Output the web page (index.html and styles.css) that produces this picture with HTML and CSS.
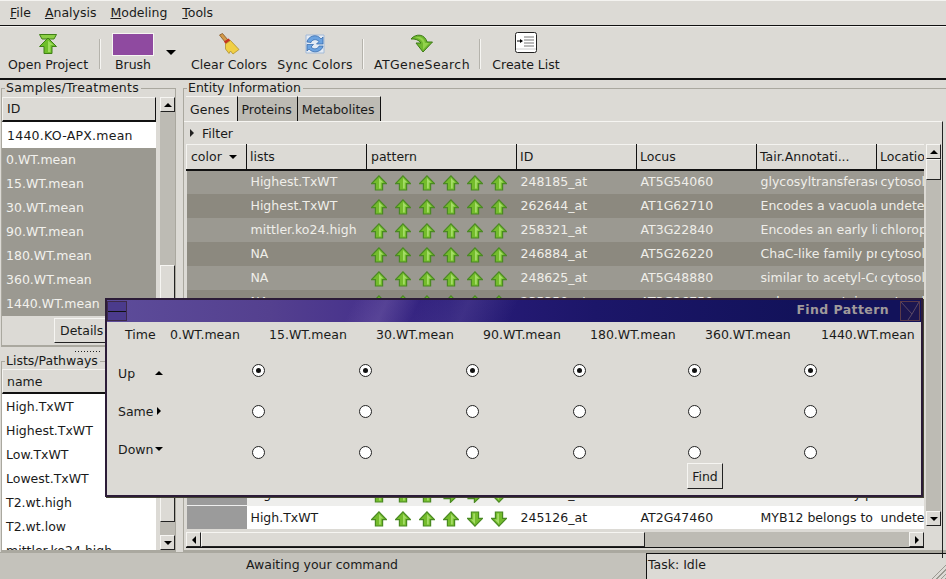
FILE: index.html
```html
<!DOCTYPE html>
<html lang="en">
  <head>
    <meta charset="UTF-8" />
    <title>Find Pattern</title>
    <link rel="stylesheet" href="styles.css">
  </head>
  <body>
    <svg class="defs" width="0" height="0">
      <symbol id="up" viewBox="0 0 16 16">
        <path d="M8 .8 15.4 8.6H11.6V15H4.4V8.6H.6Z" fill="#74bc2c" stroke="#4a8a22" stroke-width="1.2"/>
        <path d="M8 3 12.3 7.4H9.8V13.5H8Z" fill="#a4dc66"/>
      </symbol>
      <symbol id="down" viewBox="0 0 16 16">
        <path d="M8 15.2 15.4 7.4H11.6V1H4.4V7.4H.6Z" fill="#74bc2c" stroke="#4a8a22" stroke-width="1.2"/>
        <path d="M8 13 3.7 8.6H6.2V2.5H8Z" fill="#a4dc66"/>
      </symbol>
      <symbol id="right" viewBox="0 0 16 16">
        <path d="M15.2 8 7.4 .6V4.4H1V11.6H7.4V15.4Z" fill="#74bc2c" stroke="#4a8a22" stroke-width="1.2"/>
      </symbol>
    </svg>

    <nav class="menubar">
      <span><u>F</u>ile</span>
      <span><u>A</u>nalysis</span>
      <span><u>M</u>odeling</span>
      <span class="menu-tools"><u>T</u>ools</span>
    </nav>

    <div class="toolbar">
      <div class="tool tool-open">
        <svg width="24" height="24" viewBox="0 0 24 24">
          <path d="M3.5 3.5H20.5L18 8H6Z" fill="#8ccf45" stroke="#3f7f17"/>
          <path d="M12 7 20.5 15.5H16V22.5H8V15.5H3.5Z" fill="#6fbf2a" stroke="#3f7f17"/>
          <path d="M12 9.5V21H14.5V14H17.5Z" fill="#9edc5c"/>
        </svg>
        <span>Open Project</span>
      </div>
      <i class="sep"></i>
      <div class="tool tool-brush">
        <b class="swatch"></b>
        <span>Brush</span>
      </div>
      <b class="caret"></b>
      <div class="tool tool-clear">
        <svg width="24" height="24" viewBox="0 0 24 24">
          <path d="M2.5 4 5.5 2.5 11 9 8 11Z" fill="#d49a4a" stroke="#7a4a17" stroke-width=".7"/>
          <path d="M7 10.5 11.5 7.5 13.5 9.5 8.5 13Z" fill="#c8321e"/>
          <path d="M8.5 13 13.5 9.5 22 18.5 16 23 13.5 20 12 22.5 8.5 18Z" fill="#f0cf45" stroke="#a88620" stroke-width=".7"/>
        </svg>
        <span>Clear Colors</span>
      </div>
      <div class="tool tool-sync">
        <svg width="24" height="24" viewBox="0 0 24 24">
          <path d="M3 4H21V22H3Z" fill="#e4ebf4" stroke="#a3bad8"/>
          <path d="M4 11C5 5 14 2 18 8L20 6V13H13.5L16 10.5C13 7.5 9 8.5 8 11.5Z" fill="#6ca3e0" stroke="#2f64a8" stroke-width=".7"/>
          <path d="M20 15C19 21 10 23 6 18L4 20V13.5H10.5L8 16C11 19 15 18 16 15Z" fill="#6ca3e0" stroke="#2f64a8" stroke-width=".7"/>
        </svg>
        <span>Sync Colors</span>
      </div>
      <i class="sep"></i>
      <div class="tool tool-search">
        <svg width="24" height="24" viewBox="0 0 24 24">
          <path d="M1 8C6 2 15 3 17 11H22.5L13 21 6 12H11C9 9 5 7.5 1 8Z" fill="#6fb82e" stroke="#3d7a16"/>
          <path d="M5 6.5C9 5 14 6 15 12H19L13 18.5V12C12 9 9 7 5 6.5Z" fill="#93d24c"/>
        </svg>
        <span>ATGeneSearch</span>
      </div>
      <i class="sep"></i>
      <div class="tool tool-list">
        <svg width="24" height="24" viewBox="0 0 24 24">
          <rect x="1.5" y="1.5" width="21" height="20" rx="2" fill="#fff" stroke="#222"/>
          <path d="M10 6H20M10 9H20M10 12H20M10 15H20" stroke="#777"/>
          <path d="M3 10H7" stroke="#000"/>
          <path d="M6 8 9 10 6 12Z" fill="#000"/>
          <path d="M2 18H22" stroke="#ccc"/>
        </svg>
        <span>Create List</span>
      </div>
    </div>

    <main class="workspace">
      <aside class="sidebar">
        <section class="group group-samples">
          <h2>Samples/Treatments</h2>
          <div class="list-wrap">
            <div class="list">
              <div class="head">ID</div>
              <div class="item item-wide">1440.KO-APX.mean</div>
              <div class="item sel">0.WT.mean</div>
              <div class="item sel">15.WT.mean</div>
              <div class="item sel">30.WT.mean</div>
              <div class="item sel">90.WT.mean</div>
              <div class="item sel">180.WT.mean</div>
              <div class="item sel">360.WT.mean</div>
              <div class="item sel">1440.WT.mean</div>
            </div>
            <div class="vscroll">
              <b class="btn"><i class="tri-up"></i></b>
              <span class="trough"><b class="thumb thumb-samples"></b></span>
            </div>
          </div>
          <div class="details"><button>Details</button></div>
        </section>
        <div class="grip"></div>
        <section class="group group-lists">
          <h2>Lists/Pathways</h2>
          <div class="list-wrap">
            <div class="list">
              <div class="head">name</div>
              <div class="item">High.TxWT</div>
              <div class="item">Highest.TxWT</div>
              <div class="item">Low.TxWT</div>
              <div class="item">Lowest.TxWT</div>
              <div class="item">T2.wt.high</div>
              <div class="item">T2.wt.low</div>
              <div class="item">mittler.ko24.high</div>
            </div>
            <div class="vscroll">
              <b class="btn"><i class="tri-up"></i></b>
              <span class="trough"><b class="thumb thumb-lists"></b></span>
              <b class="btn"><i class="tri-down"></i></b>
            </div>
          </div>
        </section>
      </aside>

      <section class="group group-entity">
        <h2>Entity Information</h2>
        <div class="tabs">
          <span class="tab on">Genes</span>
          <span class="tab">Proteins</span>
          <span class="tab">Metabolites</span>
        </div>
        <div class="pane">
          <div class="filter"><i class="tri-right"></i>Filter</div>
          <div class="table-area">
            <div class="table-col">
              <div class="table-clip">
                <table>
                  <colgroup>
                    <col class="c-color"><col class="c-lists"><col class="c-pattern"><col class="c-id"><col class="c-locus"><col class="c-tair"><col class="c-loc">
                  </colgroup>
                  <thead>
                    <tr><th>color <i class="tri-down"></i></th><th>lists</th><th>pattern</th><th>ID</th><th>Locus</th><th>Tair.Annotati...</th><th>Location</th></tr>
                  </thead>
                  <tbody>
                    <tr class="odd"><td></td><td>Highest.TxWT</td><td class="arrows"><svg><use href="#up"/></svg><svg><use href="#up"/></svg><svg><use href="#up"/></svg><svg><use href="#up"/></svg><svg><use href="#up"/></svg><svg><use href="#up"/></svg></td><td>248185_at</td><td>AT5G54060</td><td>glycosyltransferase</td><td>cytosol</td></tr>
                    <tr class="even"><td></td><td>Highest.TxWT</td><td class="arrows"><svg><use href="#up"/></svg><svg><use href="#up"/></svg><svg><use href="#up"/></svg><svg><use href="#up"/></svg><svg><use href="#up"/></svg><svg><use href="#up"/></svg></td><td>262644_at</td><td>AT1G62710</td><td>Encodes a vacuolar</td><td>undetermined</td></tr>
                    <tr class="odd"><td></td><td>mittler.ko24.high</td><td class="arrows"><svg><use href="#up"/></svg><svg><use href="#up"/></svg><svg><use href="#up"/></svg><svg><use href="#up"/></svg><svg><use href="#up"/></svg><svg><use href="#up"/></svg></td><td>258321_at</td><td>AT3G22840</td><td>Encodes an early li</td><td>chloroplast</td></tr>
                    <tr class="even"><td></td><td>NA</td><td class="arrows"><svg><use href="#up"/></svg><svg><use href="#up"/></svg><svg><use href="#up"/></svg><svg><use href="#up"/></svg><svg><use href="#up"/></svg><svg><use href="#up"/></svg></td><td>246884_at</td><td>AT5G26220</td><td>ChaC-like family pr</td><td>cytosol</td></tr>
                    <tr class="odd"><td></td><td>NA</td><td class="arrows"><svg><use href="#up"/></svg><svg><use href="#up"/></svg><svg><use href="#up"/></svg><svg><use href="#up"/></svg><svg><use href="#up"/></svg><svg><use href="#up"/></svg></td><td>248625_at</td><td>AT5G48880</td><td>similar to acetyl-Co</td><td>cytosol</td></tr>
                    <tr class="even"><td></td><td>NA</td><td class="arrows"><svg><use href="#up"/></svg><svg><use href="#up"/></svg><svg><use href="#up"/></svg><svg><use href="#up"/></svg><svg><use href="#up"/></svg><svg><use href="#up"/></svg></td><td>235350_at</td><td>AT3G26750</td><td>unknown protein</td><td>cytosol</td></tr>
                    <tr class="filler"><td colspan="7"></td></tr>
                    <tr class="pale"><td></td><td>High.TxWT</td><td class="arrows"><svg><use href="#up"/></svg><svg><use href="#up"/></svg><svg><use href="#up"/></svg><svg><use href="#right"/></svg><svg><use href="#right"/></svg><svg><use href="#down"/></svg></td><td>245126_at</td><td>AT2G47460</td><td>Unknown family protein</td><td>undetermined</td></tr>
                    <tr class="white"><td></td><td>High.TxWT</td><td class="arrows"><svg><use href="#up"/></svg><svg><use href="#up"/></svg><svg><use href="#up"/></svg><svg><use href="#up"/></svg><svg><use href="#down"/></svg><svg><use href="#down"/></svg></td><td>245126_at</td><td>AT2G47460</td><td>MYB12 belongs to</td><td>undetermined</td></tr>
                  </tbody>
                </table>
              </div>
              <div class="hscroll">
                <b class="btn"><i class="tri-left"></i></b>
                <span class="htrough"><b class="hthumb"></b></span>
                <b class="btn"><i class="tri-right"></i></b>
              </div>
            </div>
            <div class="vscroll vscroll-table">
              <b class="btn"><i class="tri-up"></i></b>
              <span class="trough"><b class="thumb thumb-table"></b></span>
              <b class="btn"><i class="tri-down"></i></b>
            </div>
          </div>
        </div>
      </section>
    </main>

    <footer class="statusbar">
      <div class="status-msg">Awaiting your command</div>
      <div class="status-task">Task: Idle<b class="size-grip"></b></div>
    </footer>

    <div class="dialog">
      <div class="titlebar">
        <span class="win-btn win-min"></span>
        <span class="win-title">Find Pattern</span>
        <span class="win-btn win-close">
          <svg width="18" height="18" viewBox="0 0 18 18"><path d="M0 0 11 12 18 0M11 12 7 18" fill="none" stroke="#5c4a68"/></svg>
        </span>
      </div>
      <div class="pattern-grid">
        <span class="time">Time</span>
        <span>0.WT.mean</span><span>15.WT.mean</span><span>30.WT.mean</span><span>90.WT.mean</span><span>180.WT.mean</span><span>360.WT.mean</span><span>1440.WT.mean</span>

        <span class="dir dir-up">Up<i class="tri-up"></i></span>
        <i class="radio on"></i><i class="radio on"></i><i class="radio on"></i><i class="radio on"></i><i class="radio on"></i><i class="radio on"></i><i></i>

        <span class="dir dir-same">Same<i class="tri-right"></i></span>
        <i class="radio"></i><i class="radio"></i><i class="radio"></i><i class="radio"></i><i class="radio"></i><i class="radio"></i><i></i>

        <span class="dir dir-down">Down<i class="tri-down"></i></span>
        <i class="radio"></i><i class="radio"></i><i class="radio"></i><i class="radio"></i><i class="radio"></i><i class="radio"></i><i></i>
      </div>
      <button class="find">Find</button>
    </div>
  </body>
</html>
```

FILE: styles.css
```css
* {
  box-sizing: border-box;
}

html,
body {
  height: 100%;
}

body {
  margin: 0;
  width: 946px;
  height: 579px;
  overflow: hidden;
  display: flex;
  flex-direction: column;
  position: relative;
  background-color: #dcdad5;
  color: #1a1a1a;
  font-family: "DejaVu Sans", sans-serif;
  font-size: 12.5px;
}

.defs {
  position: absolute;
}

/* small triangles */
.tri-up,
.tri-down,
.tri-left,
.tri-right {
  display: inline-block;
  width: 0;
  height: 0;
  border: 4px solid transparent;
}

.tri-up {
  border-top: 0;
  border-bottom: 4px solid #000;
}

.tri-down {
  border-bottom: 0;
  border-top: 4px solid #000;
}

.tri-left {
  border-left: 0;
  border-right: 4px solid #000;
}

.tri-right {
  border-right: 0;
  border-left: 4px solid #000;
}

/* menu + toolbar */
.menubar {
  height: 26px;
  flex: none;
  display: flex;
  align-items: center;
  gap: 14px;
  padding: 0 0 1px 10px;
  border-bottom: 1px solid #111;
  box-shadow: inset 0 1px 0 #f4f3f0;
}

.menu-tools {
  margin-left: 1px;
}

.toolbar {
  height: 54px;
  flex: none;
  display: flex;
  align-items: flex-start;
  border-top: 1px solid #f4f3f0;
  border-bottom: 2px solid #111;
}

.tool {
  display: flex;
  flex-direction: column;
  align-items: center;
  padding-top: 4px;
  height: 51px;
  gap: 2px;
}

.tool svg {
  flex: none;
}

.tool-open {
  margin-left: 7px;
  width: 82px;
}

.tool-brush {
  margin-left: 11px;
  width: 42px;
  padding-top: 6px;
  gap: 1px;
}

.tool-clear {
  margin-left: 14px;
  width: 78px;
}

.tool-sync {
  margin-left: 9px;
  width: 76px;
  letter-spacing: 0.2px;
}

.tool-search {
  margin-left: 10px;
  width: 96px;
  letter-spacing: 0.4px;
}

.tool-list {
  margin-left: 10px;
  width: 70px;
}

.swatch {
  display: block;
  width: 42px;
  height: 23px;
  flex: none;
  background-color: #8f4aa0;
  border: 1px solid #f6f5f2;
}

.caret {
  margin: 23px 0 0 12px;
  width: 0;
  height: 0;
  border: 5px solid transparent;
  border-top: 5px solid #000;
  border-bottom: 0;
}

.sep {
  width: 2px;
  height: 30px;
  margin: 12px 0 0 10px;
  background-color: #b5b3ac;
  border-right: 1px solid #f6f5f2;
}

.tool-sync + .sep,
.tool-search + .sep {
  margin-left: 9px;
}

/* main area */
.workspace {
  flex: 1;
  min-height: 0;
  display: flex;
  gap: 5px;
  padding-top: 2px;
}

.sidebar {
  width: 178px;
  flex: none;
  display: flex;
  flex-direction: column;
}

.group {
  position: relative;
  border: 1px solid #aaa89f;
  border-bottom-width: 2px;
  margin: 6px 2px 0 1px;
}

.group h2 {
  position: absolute;
  top: -9px;
  left: 3px;
  margin: 0;
  padding: 0 2px 0 1px;
  font-size: 12.5px;
  font-weight: normal;
  line-height: 16px;
  background-color: #dcdad5;
  white-space: nowrap;
}

.group-samples {
  height: 259px;
}

.group-samples h2 {
  letter-spacing: 0.3px;
}

.group-lists {
  flex: 1;
  min-height: 0;
  margin-top: 0;
}

.grip {
  height: 12px;
  flex: none;
  margin: 2px 0 0 75px;
  width: 26px;
  background: repeating-linear-gradient(90deg, #222 0 1px, transparent 1px 3px) 0 2px / 100% 1px no-repeat;
}

.list-wrap {
  display: flex;
  padding-top: 8px;
  height: 227px;
}

.group-lists .list-wrap {
  height: 100%;
  padding-top: 7px;
}

.list {
  width: 154px;
  flex: none;
  overflow: hidden;
  background-color: #fff;
}

.head {
  height: 25px;
  margin-bottom: 2px;
  padding-left: 4px;
  line-height: 22px;
  background-color: #dcdad5;
  border-top: 1px solid #f4f3f0;
  border-left: 1px solid #f4f3f0;
  border-right: 1px solid #111;
  border-bottom: 2px solid #111;
}

.group-lists .head {
  margin-bottom: 1px;
  line-height: 24px;
}

.item {
  height: 24px;
  padding-left: 4px;
  line-height: 24px;
  white-space: nowrap;
}

.item-wide {
  padding-left: 5px;
  letter-spacing: 0.25px;
}

.sel {
  background-color: #9b9991;
  color: #f2f1ed;
}

.vscroll {
  width: 15px;
  margin-left: 4px;
  flex: none;
  display: flex;
  flex-direction: column;
  background-color: #bdbbb4;
}

.btn {
  height: 15px;
  width: 15px;
  flex: none;
  display: flex;
  align-items: center;
  justify-content: center;
  background-color: #dcdad5;
  border: 1px solid;
  border-color: #f6f5f2 #222 #222 #f6f5f2;
}

.trough {
  flex: 1;
  position: relative;
}

.thumb {
  position: absolute;
  left: 0;
  width: 15px;
  background-color: #dcdad5;
  border: 1px solid;
  border-color: #f6f5f2 #222 #222 #f6f5f2;
}

.thumb-samples {
  top: 153px;
  height: 59px;
}

.thumb-lists {
  top: 0;
  height: 138px;
}

.thumb-table {
  top: 0;
  height: 21px;
}

.details {
  display: flex;
  padding: 2px 0 0 52px;
}

button {
  font: inherit;
  color: inherit;
  background-color: #dcdad5;
  border: 1px solid;
  border-color: #f6f5f2 #222 #222 #f6f5f2;
  padding: 0;
}

.details button {
  width: 52px;
  height: 25px;
  text-align: left;
  padding-left: 5px;
}

/* entity panel */
.group-entity {
  flex: 1;
  min-width: 0;
  margin: 6px 0 0;
  border-right: 0;
}

.tabs {
  display: flex;
  height: 26px;
  margin-top: 7px;
  padding-left: 2px;
}

.tab {
  height: 26px;
  padding: 0 5px 0 4px;
  line-height: 25px;
  background-color: #bdbbb4;
  border-top: 1px solid #f4f3f0;
  border-right: 1px solid #111;
}

.tab.on {
  padding-right: 7px;
  background-color: #dcdad5;
}

.pane {
  border-top: 1px solid #f6f5f2;
  border-right: 1px solid #222;
  margin: -1px 3px 0 0;
  height: 437px;
  position: relative;
  padding-left: 2px;
}

.filter {
  height: 22px;
  display: flex;
  align-items: center;
  gap: 8px;
  padding-left: 4px;
}

.filter .tri-right {
  border-width: 4px 0 4px 4px;
  border-left-color: #222;
}

.table-area {
  display: flex;
  height: 404px;
}

.table-col {
  width: 738px;
  flex: none;
  display: flex;
  flex-direction: column;
}

.table-clip {
  height: 385px;
  overflow: hidden;
}

table {
  border-collapse: collapse;
  table-layout: fixed;
  width: 738px;
}

.c-color { width: 60px; }
.c-lists { width: 120px; }
.c-pattern { width: 150px; }
.c-id { width: 120px; }
.c-locus { width: 120px; }
.c-tair { width: 120px; }
.c-loc { width: 48px; }

th {
  height: 25px;
  padding: 0 0 1px 3px;
  font-weight: normal;
  text-align: left;
  white-space: nowrap;
  overflow: hidden;
  background-color: #dcdad5;
  border-top: 1px solid #f4f3f0;
  border-left: 1px solid #f4f3f0;
  border-right: 1px solid #111;
  border-bottom: 2px solid #111;
}

th:first-child,
th:nth-child(3) {
  padding-left: 4px;
}

th .tri-down {
  margin-left: 3px;
  border-width: 4px 4px 0;
  vertical-align: 2px;
}

td {
  height: 24px;
  padding: 0 0 1px 4px;
  white-space: nowrap;
  overflow: hidden;
  color: #efeee9;
}

.odd {
  background-color: #9b9991;
}

.even {
  background-color: #8c897f;
}

.filler td {
  height: 168px;
}

.pale {
  background-color: #eeeeec;
}

.white {
  background-color: #fff;
}

.white td,
.pale td {
  color: #1a1a1a;
}

.white td:first-child,
.pale td:first-child {
  background-color: #9b9b9b;
  border-bottom: 1px solid #eee;
}

td.arrows {
  padding: 2px 0 0 4px;
  font-size: 0;
}

.arrows svg {
  width: 16px;
  height: 16px;
  margin-right: 8px;
}

.hscroll {
  height: 16px;
  margin-top: 3px;
  display: flex;
  background-color: #bdbbb4;
  border-bottom: 1px solid #111;
}

.hscroll .btn {
  height: 15px;
}

.htrough {
  flex: 1;
  position: relative;
}

.hthumb {
  position: absolute;
  left: 0;
  top: 0;
  width: 444px;
  height: 15px;
  background-color: #dcdad5;
  border: 1px solid;
  border-color: #f6f5f2 #222 #222 #f6f5f2;
}

.vscroll-table {
  margin-left: 2px;
  height: 382px;
}

/* status */
.statusbar {
  height: 27px;
  flex: none;
  display: flex;
  border-top: 1px solid #aaa89f;
}

.status-msg {
  width: 646px;
  text-align: center;
  line-height: 24px;
  padding-right: 2px;
  background-color: #c4c2bb;
}

.status-task {
  flex: 1;
  position: relative;
  line-height: 22px;
  padding-left: 1px;
  border-left: 1px solid #111;
  border-top: 1px solid #111;
}

.size-grip {
  position: absolute;
  right: 0;
  bottom: 0;
  width: 15px;
  height: 15px;
  background: repeating-linear-gradient(135deg, transparent 0 2px, #9b9991 2px 3px);
  clip-path: polygon(100% 0, 100% 100%, 0 100%);
}

/* floating window */
.dialog {
  position: absolute;
  left: 105px;
  top: 298px;
  width: 818px;
  height: 199px;
  background-color: #dcdad5;
  border: 2px solid #2c1c38;
  box-shadow: 1px 1px 0 #443;
}

.titlebar {
  height: 22px;
  display: flex;
  align-items: center;
  background:
    linear-gradient(115deg, transparent 30%, rgba(150, 130, 190, 0.25) 34%, transparent 38%, rgba(150, 130, 190, 0.2) 44%, transparent 50%),
    linear-gradient(90deg, #5d4c9a 0, #54408f 20%, #47328c 32%, #2a1c7a 42%, #1c1669 60%, #12125a 85%);
}

.win-btn {
  width: 20px;
  height: 20px;
  flex: none;
  border: 1px solid #3d2a4a;
}

.win-min {
  background: linear-gradient(#4b3b8c 0 9px, #111 9px 10px, #4b3b8c 10px);
}

.win-close {
  display: block;
  margin-right: 1px;
  background-color: #1c1650;
  border-color: #5a3a4a;
}

.win-close svg {
  display: block;
}

.win-title {
  margin: 0 11px 3px auto;
  font-weight: bold;
  font-size: 12.5px;
  letter-spacing: 0.4px;
  color: #a09a9a;
}

.pattern-grid {
  display: grid;
  grid-template-columns: 63px 99px 107px 107px 107px 115px 116px 100px;
  grid-template-rows: 24px 48px 34px 48px;
  justify-items: start;
  align-items: center;
}

.time {
  padding-left: 18px;
}

.dir {
  display: flex;
  align-items: center;
  justify-content: space-between;
  padding-left: 11px;
  width: 56px;
  white-space: nowrap;
}

.dir-up {
  margin-top: 6px;
}

.dir-same .tri-right {
  margin-right: 2px;
}

.dir-down {
  margin-bottom: 6px;
}

.radio {
  justify-self: end;
  margin-right: 4px;
  width: 13px;
  height: 13px;
  border-radius: 50%;
  background: #fff;
  border: 1px solid #222;
  display: grid;
  place-items: center;
}

.radio.on::after {
  content: "";
  width: 5px;
  height: 5px;
  border-radius: 50%;
  background: #111;
}

.find {
  position: absolute;
  left: 580px;
  top: 163px;
  width: 36px;
  height: 26px;
}
```
